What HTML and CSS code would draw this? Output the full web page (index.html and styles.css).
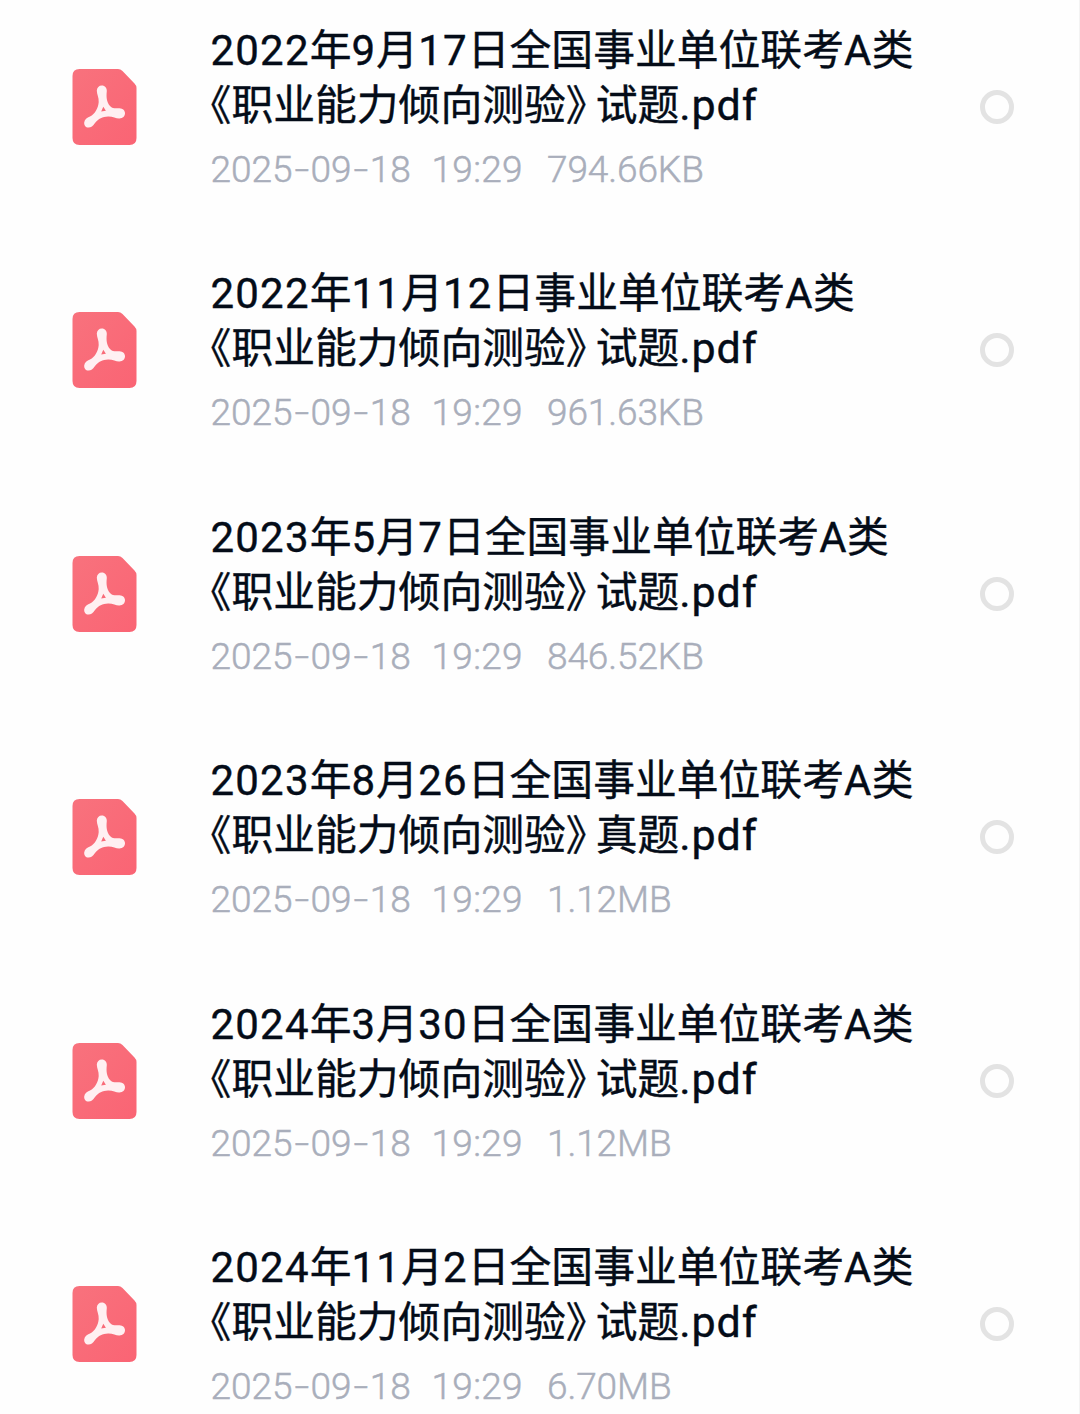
FILE: index.html
```html
<!DOCTYPE html>
<html lang="zh-CN">
<head>
<meta charset="utf-8">
<title>文件列表</title>
<link rel="stylesheet" href="styles.css">
</head>
<body>
<svg class="defs" aria-hidden="true">
  <defs>
    <linearGradient id="sheet" x1="0" y1="0" x2="1" y2="1">
      <stop offset="0" stop-color="#f8727d"/>
      <stop offset="1" stop-color="#fa6474"/>
    </linearGradient>
  </defs>
  <symbol id="pdf" viewBox="0 0 64 76">
    <path fill="url(#sheet)" d="M7 0H45.500Q48 0 50 2L62 14.500Q64 16.500 64 19V69Q64 76 57 76H7Q0 76 0 69V7Q0 0 7 0Z"/>
    <path fill="#fff0f2" fill-rule="evenodd" d="M29.300 16.500C32.500 16.500 34.500 19 34.300 22C33.700 28 34 33 37.500 37C40 39.800 43.500 39.300 47 39.200C50.500 39.300 52.500 41.500 52.500 44.300C52.500 47.500 50 49.600 46.500 49.400C43.500 49.300 40 47.200 35.500 47.400C30 47.500 26 49.500 22.500 54C20.500 57 18.500 58.600 16 58.600C13 58.600 11.500 56.300 11.700 53.500C12 50.500 14.500 49 17.500 47.600C22.500 45 25.800 39 26.200 33C26.500 28.500 24.300 25 24.300 21.500C24.500 18.500 26.500 16.500 29.300 16.500ZM30.800 37.800L28.700 42.500L33.400 41.800Z"/>
  </symbol>
</svg>
<ul class="files">
  <li class="file">
    <svg class="icon"><use href="#pdf"/></svg>
    <div class="info">
      <div class="name"><span class="n">2022</span>年<span class="n">9</span>月<span class="n">17</span>日全国事业单位联考<span class="a">A</span>类<br><span class="open">《</span>职业能力倾向测验<span class="close">》</span>试题<span class="ext">.pdf</span></div>
      <div class="meta"><span class="date">2025<i>-</i>09<i>-</i>18</span><span class="time">19:29</span><span class="size">794.66KB</span></div>
    </div>
    <span class="radio"></span>
  </li>
  <li class="file">
    <svg class="icon"><use href="#pdf"/></svg>
    <div class="info">
      <div class="name"><span class="n">2022</span>年<span class="n">11</span>月<span class="n">12</span>日事业单位联考<span class="a">A</span>类<br><span class="open">《</span>职业能力倾向测验<span class="close">》</span>试题<span class="ext">.pdf</span></div>
      <div class="meta"><span class="date">2025<i>-</i>09<i>-</i>18</span><span class="time">19:29</span><span class="size">961.63KB</span></div>
    </div>
    <span class="radio"></span>
  </li>
  <li class="file">
    <svg class="icon"><use href="#pdf"/></svg>
    <div class="info">
      <div class="name"><span class="n">2023</span>年<span class="n">5</span>月<span class="n">7</span>日全国事业单位联考<span class="a">A</span>类<br><span class="open">《</span>职业能力倾向测验<span class="close">》</span>试题<span class="ext">.pdf</span></div>
      <div class="meta"><span class="date">2025<i>-</i>09<i>-</i>18</span><span class="time">19:29</span><span class="size">846.52KB</span></div>
    </div>
    <span class="radio"></span>
  </li>
  <li class="file">
    <svg class="icon"><use href="#pdf"/></svg>
    <div class="info">
      <div class="name"><span class="n">2023</span>年<span class="n">8</span>月<span class="n">26</span>日全国事业单位联考<span class="a">A</span>类<br><span class="open">《</span>职业能力倾向测验<span class="close">》</span>真题<span class="ext">.pdf</span></div>
      <div class="meta"><span class="date">2025<i>-</i>09<i>-</i>18</span><span class="time">19:29</span><span class="size">1.12MB</span></div>
    </div>
    <span class="radio"></span>
  </li>
  <li class="file">
    <svg class="icon"><use href="#pdf"/></svg>
    <div class="info">
      <div class="name"><span class="n">2024</span>年<span class="n">3</span>月<span class="n">30</span>日全国事业单位联考<span class="a">A</span>类<br><span class="open">《</span>职业能力倾向测验<span class="close">》</span>试题<span class="ext">.pdf</span></div>
      <div class="meta"><span class="date">2025<i>-</i>09<i>-</i>18</span><span class="time">19:29</span><span class="size">1.12MB</span></div>
    </div>
    <span class="radio"></span>
  </li>
  <li class="file">
    <svg class="icon"><use href="#pdf"/></svg>
    <div class="info">
      <div class="name"><span class="n">2024</span>年<span class="n">11</span>月<span class="n">2</span>日全国事业单位联考<span class="a">A</span>类<br><span class="open">《</span>职业能力倾向测验<span class="close">》</span>试题<span class="ext">.pdf</span></div>
      <div class="meta"><span class="date">2025<i>-</i>09<i>-</i>18</span><span class="time">19:29</span><span class="size">6.70MB</span></div>
    </div>
    <span class="radio"></span>
  </li>
</ul>
</body>
</html>
```
FILE: styles.css
```css
* { box-sizing: border-box; }
html, body { height: 1414px; overflow: hidden; }
body {
  margin: 0;
  background: #fefefe;
  border-right: 1px solid #f3f3f3;
  font-family: "Noto Sans CJK SC", sans-serif;
}
.defs { position: absolute; width: 0; height: 0; }
.files { list-style: none; margin: 0; padding: 0; }
.file {
  display: flex;
  align-items: center;
  height: 243.5px;
  padding: 0 65px 30px 72px;
}
.icon { width: 65px; height: 76px; flex: none; }
.info { flex: 1; margin-left: 73.500px; padding-bottom: 1px; white-space: nowrap; }
.name {
  font-size: 41.800px;
  line-height: 55px;
  color: #040c18;
  font-weight: 400;
  -webkit-text-stroke: 0.4px #040c18;
}
.n, .a, .ext, .meta { font-family: Roboto, sans-serif; }
.n, .a, .ext { line-height: 1; }
.n { font-size: 42px; letter-spacing: 1.200px; }
.a { letter-spacing: 0.500px; }
.ext { font-size: 43px; letter-spacing: 0.900px; }
.open, .close { font-feature-settings: "halt" 1; }
.close { margin-right: 9px; }
.meta {
  display: flex;
  margin-top: 17px;
  font-size: 37px;
  line-height: 46px;
  font-weight: 300;
  color: #a9aebb;
  -webkit-text-stroke: 0.5px #a9aebb;
}
.date { width: 221px; }
.time { width: 115.500px; letter-spacing: 0.300px; }
.size { letter-spacing: -0.100px; }
.meta i {
  display: inline-block;
  width: 18px;
  text-align: center;
  font-style: normal;
  transform: scaleX(1.400);
}
.radio {
  flex: none;
  width: 34px;
  height: 34px;
  border: 5px solid #e3e3e3;
  border-radius: 50%;
}
```
